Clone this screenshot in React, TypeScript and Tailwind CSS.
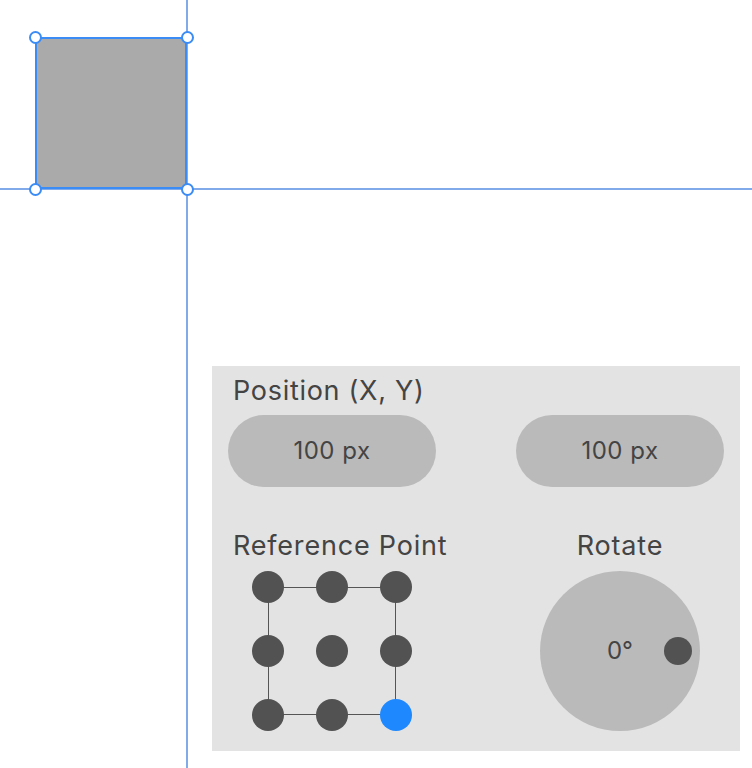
import React from "react";

const font = { fontFamily: "Inter, 'Noto Sans', sans-serif" };

function Handle({ className }: { className: string }) {
  return (
    <div
      className={`absolute w-[13px] h-[13px] rounded-full bg-white border-2 border-[#3b8cf5] ${className}`}
    />
  );
}

export default function App() {
  const dots = Array.from({ length: 9 }, (_, i) => i);
  return (
    <div className="relative w-[752px] h-[768px] bg-white overflow-hidden" style={font}>
      {/* guides */}
      <div className="absolute left-[186px] top-0 w-[1.5px] h-[768px] bg-[#80aaea]" />
      <div className="absolute left-0 top-[188px] w-[752px] h-[1.5px] bg-[#80aaea]" />
      {/* selected shape */}
      <div className="absolute left-[35px] top-[37px] w-[152px] h-[152px] bg-[#aaaaaa] border-2 border-[#3b8cf5]" />
      <Handle className="left-[28.5px] top-[30.5px]" />
      <Handle className="left-[180.5px] top-[30.5px]" />
      <Handle className="left-[28.5px] top-[182.5px]" />
      <Handle className="left-[180.5px] top-[182.5px]" />

      {/* panel */}
      <div className="pt-[366px] pl-[212px]">
        <div className="w-[528px] h-[385px] bg-[#e3e3e3] px-4 pt-[10px] text-[#444444]">
          <div className="pl-[5px] text-[27px] leading-[30px] tracking-[0.7px] whitespace-nowrap">Position (X, Y)</div>
          <div className="mt-[9px] flex justify-between">
            <div className="w-[208px] h-[72px] rounded-full bg-[#bababa] flex items-center justify-center text-[24px] tracking-[0.5px]">
              100 px
            </div>
            <div className="w-[208px] h-[72px] rounded-full bg-[#bababa] flex items-center justify-center text-[24px] tracking-[0.5px]">
              100 px
            </div>
          </div>
          <div className="mt-[44px] flex justify-between">
            <div className="w-[208px] flex flex-col items-center">
              <div className="self-start pl-[5px] text-[27px] leading-[30px] tracking-[0.8px] whitespace-nowrap">Reference Point</div>
              <div className="relative mt-[10px] w-[160px] h-[160px]">
                <div className="absolute left-[16px] top-[16px] w-[128px] h-[128px] border border-[#555555]" />
                <div className="relative grid grid-cols-3 gap-[32px]">
                  {dots.map((i) => (
                    <div
                      key={i}
                      className={`w-[32px] h-[32px] rounded-full ${i === 8 ? "bg-[#1e88ff]" : "bg-[#525252]"}`}
                    />
                  ))}
                </div>
              </div>
            </div>
            <div className="w-[208px] flex flex-col items-center">
              <div className="text-[27px] leading-[30px] tracking-[0.8px] whitespace-nowrap">Rotate</div>
              <div className="relative mt-[10px] w-[160px] h-[160px] rounded-full bg-[#bababa] flex items-center justify-center text-[24px]">
                0°
                <div className="absolute right-[8px] top-[66px] w-[28px] h-[28px] rounded-full bg-[#525252]" />
              </div>
            </div>
          </div>
        </div>
      </div>
    </div>
  );
}
